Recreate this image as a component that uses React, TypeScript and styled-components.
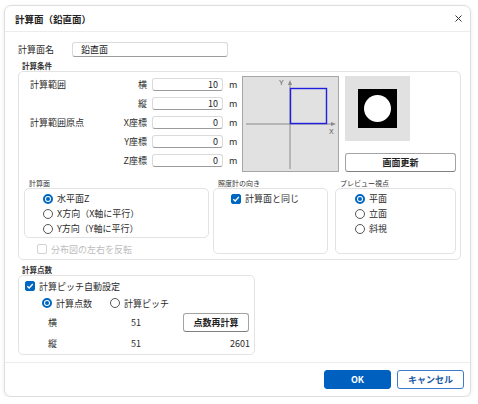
import React from "react";
import styled, { createGlobalStyle, css } from "styled-components";

const ACCENT = "#0067c0";

const GlobalStyle = createGlobalStyle`
  * { box-sizing: border-box; }
  html, body { margin: 0; padding: 0; background: #fff; }
  body {
    font-family: "Noto Sans CJK JP", "Noto Sans", sans-serif;
    font-size: 9px;
    color: #2b2b2b;
  }
`;

const Dialog = styled.div`
  margin: 5px 0 0 4px;
  width: 467px;
  height: 392px;
  border: 1px solid #dedede;
  border-radius: 7px;
  background: #fff;
  box-shadow: 0 1px 4px rgba(0, 0, 0, 0.08);
  display: flex;
  flex-direction: column;
  overflow: hidden;
`;

const Header = styled.div`
  flex: none;
  height: 26px;
  display: flex;
  align-items: center;
  justify-content: space-between;
  padding: 0 7px 0 10px;
  border-bottom: 1px solid #ececec;
`;

const Title = styled.div`
  font-size: 9.5px;
  font-weight: 700;
  color: #222;
`;

const CloseButton = styled.button`
  width: 9px;
  height: 9px;
  padding: 0;
  border: 0;
  background: none;
  display: flex;
  align-items: center;
  justify-content: center;
`;

const Body = styled.div`
  flex: 1;
  padding: 10px 0 0 13px;
`;

const NameRow = styled.div`
  display: flex;
  align-items: center;
  height: 15px;
`;

const NameLabel = styled.div`
  width: 54px;
`;

const inputBase = css`
  height: 100%;
  border: 1px solid #dadada;
  border-bottom-color: #9c9c9c;
  border-radius: 3px;
  background: #fff;
  font-family: inherit;
  font-size: 9px;
  color: #222;
  outline: none;
`;

const TextInput = styled.input`
  ${inputBase}
  width: 156px;
  padding: 0 8px;
`;

const GroupTitle = styled.div<{ $top: number }>`
  margin: ${(p) => p.$top}px 0 0 4px;
  height: 11px;
  line-height: 11px;
  font-size: 7.5px;
  font-weight: 700;
  color: #333;
`;

const GroupBox = styled.div<{ $width: number }>`
  width: ${(p) => p.$width}px;
  border: 1px solid #e3e3e3;
  border-radius: 5px;
  padding: 3px 3px 3px 3px;
`;

const TopArea = styled.div`
  display: flex;
  align-items: flex-start;
  padding-left: 8px;
`;

const FieldGrid = styled.div`
  display: grid;
  grid-template-columns: 82px 30px 71px 8px;
  grid-auto-rows: 19px;
  column-gap: 5px;
  align-items: center;
`;

const AxisLabel = styled.div`
  text-align: right;
`;

const NumberInput = styled.input`
  ${inputBase}
  height: 13px;
  width: 71px;
  text-align: right;
  padding: 0 4px 0 0;
`;

const Unit = styled.div`
  margin-left: 1px;
`;

const AxisPreview = styled.div`
  flex: none;
  width: 97px;
  height: 96px;
  margin: 1px 0 0 6px;
  background: #e1e1e1;
  border: 1px solid #a6a6a6;
  svg {
    display: block;
  }
`;

const RightColumn = styled.div`
  display: flex;
  flex-direction: column;
  margin-left: 6px;
`;

const ShapePreview = styled.div`
  width: 65px;
  height: 65px;
  margin-top: 1px;
  background: #e1e1e1;
  svg {
    display: block;
  }
`;

const PlainButton = styled.button<{ $width: number }>`
  width: ${(p) => p.$width}px;
  height: 19px;
  padding: 0;
  border: 1px solid #a3a3a3;
  border-bottom-color: #808080;
  border-radius: 3px;
  background: #fff;
  font-family: inherit;
  font-size: 9px;
  font-weight: 700;
  color: #222;
`;

const UpdateButton = styled(PlainButton)`
  margin-top: 12px;
`;

const SubArea = styled.div`
  display: flex;
  align-items: flex-start;
  margin-top: 6px;
  padding-left: 2px;
`;

const SubGroup = styled.div<{ $gap?: number }>`
  display: flex;
  flex-direction: column;
  margin-left: ${(p) => p.$gap ?? 0}px;
`;

const SubLabel = styled.div`
  height: 10px;
  line-height: 10px;
  padding-left: 5px;
  font-size: 7px;
  color: #333;
`;

const SubBox = styled.div<{ $width: number; $height: number; $pad?: number }>`
  width: ${(p) => p.$width}px;
  height: ${(p) => p.$height}px;
  border: 1px solid #e3e3e3;
  border-radius: 5px;
  padding: 2px 0 0 ${(p) => p.$pad ?? 18}px;
`;

const OptionRow = styled.div<{ $height?: number }>`
  display: flex;
  align-items: center;
  gap: 4px;
  height: ${(p) => p.$height ?? 15}px;
`;

const RadioDot = styled.span<{ $on?: boolean }>`
  flex: none;
  width: 10px;
  height: 10px;
  border-radius: 50%;
  background: #fff;
  border: ${(p) => (p.$on ? `2px solid ${ACCENT}` : "1px solid #555")};
  display: flex;
  align-items: center;
  justify-content: center;
  &::after {
    content: "";
    display: ${(p) => (p.$on ? "block" : "none")};
    width: 4px;
    height: 4px;
    border-radius: 50%;
    background: ${ACCENT};
  }
`;

const CheckMark = styled.span<{ $on?: boolean; $disabled?: boolean }>`
  flex: none;
  width: 10px;
  height: 10px;
  border-radius: 2px;
  background: ${(p) => (p.$on ? ACCENT : "#fff")};
  border: 1px solid
    ${(p) => (p.$on ? ACCENT : p.$disabled ? "#d2d2d2" : "#555")};
  display: flex;
  align-items: center;
  justify-content: center;
`;

const DisabledRow = styled(OptionRow)`
  margin-top: 4px;
  padding-left: 13px;
  color: #bdbdbd;
`;

const CheckRow = styled(OptionRow)`
  padding-left: 3px;
`;

const PitchRadioRow = styled(OptionRow)`
  margin-top: 3px;
  padding-left: 20px;
`;

const Spacer = styled.span`
  width: 10px;
`;

const DataRow = styled.div<{ $height: number; $top: number }>`
  display: flex;
  align-items: center;
  height: ${(p) => p.$height}px;
  margin-top: ${(p) => p.$top}px;
  padding: 0 2px 0 26px;
`;

const DataLabel = styled.div`
  width: 83px;
`;

const DataValue = styled.div`
  flex: 1;
`;

const Total = styled.div`
  margin-right: -1px;
`;

const Footer = styled.div`
  flex: none;
  height: 34px;
  border-top: 1px solid #ececec;
  display: flex;
  align-items: center;
  justify-content: flex-end;
  gap: 6px;
  padding-right: 6px;
`;

const DialogButton = styled.button<{ $primary?: boolean }>`
  width: 67px;
  height: 19px;
  padding: 0;
  border-radius: 3px;
  font-family: inherit;
  font-size: 9px;
  font-weight: 700;
  border: 1px solid ${(p) => (p.$primary ? "#0060c0" : "#3a7dcc")};
  background: ${(p) => (p.$primary ? "#0060c0" : "#fff")};
  color: ${(p) => (p.$primary ? "#fff" : "#1b5aa6")};
`;

function Radio({ on, label }: { on?: boolean; label: string }) {
  return (
    <>
      <RadioDot $on={on} />
      <span>{label}</span>
    </>
  );
}

function Check({ on, disabled }: { on?: boolean; disabled?: boolean }) {
  return (
    <CheckMark $on={on} $disabled={disabled}>
      {on && (
        <svg width="8" height="8" viewBox="0 0 8 8">
          <polyline
            points="1.3,4.2 3.2,6 6.8,2"
            fill="none"
            stroke="#fff"
            strokeWidth="1.3"
          />
        </svg>
      )}
    </CheckMark>
  );
}

const fields = [
  { label: "計算範囲", axis: "横", value: "10" },
  { label: "", axis: "縦", value: "10" },
  { label: "計算範囲原点", axis: "X座標", value: "0" },
  { label: "", axis: "Y座標", value: "0" },
  { label: "", axis: "Z座標", value: "0" },
];

export default function App() {
  return (
    <>
      <GlobalStyle />
      <Dialog>
        <Header>
          <Title>計算面（鉛直面）</Title>
          <CloseButton aria-label="閉じる">
            <svg width="7" height="7" viewBox="0 0 7 7">
              <path d="M0.5 0.5L6.5 6.5M6.5 0.5L0.5 6.5" stroke="#333" strokeWidth="1" />
            </svg>
          </CloseButton>
        </Header>

        <Body>
          <NameRow>
            <NameLabel>計算面名</NameLabel>
            <TextInput readOnly value="鉛直面" />
          </NameRow>

          <GroupTitle $top={3}>計算条件</GroupTitle>
          <GroupBox $width={443}>
            <TopArea>
              <FieldGrid>
                {fields.map((f) => (
                  <React.Fragment key={f.axis}>
                    <div>{f.label}</div>
                    <AxisLabel>{f.axis}</AxisLabel>
                    <NumberInput readOnly value={f.value} />
                    <Unit>m</Unit>
                  </React.Fragment>
                ))}
              </FieldGrid>

              <AxisPreview>
                <svg width="95" height="94" viewBox="0 0 95 94">
                  <line x1="3" y1="47" x2="90" y2="47" stroke="#8a8a8a" strokeWidth="1" />
                  <line x1="47" y1="6" x2="47" y2="92" stroke="#8a8a8a" strokeWidth="1" />
                  <polygon points="93,47 88,45 88,49" fill="#8a8a8a" />
                  <polygon points="47,3 45,8 49,8" fill="#8a8a8a" />
                  <rect x="47.5" y="11.5" width="36" height="35" fill="none" stroke="#1f1fe0" strokeWidth="1.4" />
                  <text x="36" y="8" fontSize="7" fill="#555" fontFamily="Liberation Sans, sans-serif">Y</text>
                  <text x="86" y="57" fontSize="7" fill="#555" fontFamily="Liberation Sans, sans-serif">X</text>
                </svg>
              </AxisPreview>

              <RightColumn>
                <ShapePreview>
                  <svg width="65" height="65" viewBox="0 0 65 65">
                    <rect x="13" y="13" width="39" height="39" fill="#000" />
                    <circle cx="32.5" cy="32.5" r="13.5" fill="#fff" />
                  </svg>
                </ShapePreview>
                <UpdateButton $width={111}>画面更新</UpdateButton>
              </RightColumn>
            </TopArea>

            <SubArea>
              <SubGroup>
                <SubLabel>計算面</SubLabel>
                <SubBox $width={185} $height={50}>
                  <OptionRow>
                    <Radio on label="水平面Z" />
                  </OptionRow>
                  <OptionRow>
                    <Radio label="X方向（X軸に平行）" />
                  </OptionRow>
                  <OptionRow>
                    <Radio label="Y方向（Y軸に平行）" />
                  </OptionRow>
                </SubBox>
                <DisabledRow $height={14}>
                  <Check disabled />
                  <span>分布図の左右を反転</span>
                </DisabledRow>
              </SubGroup>

              <SubGroup $gap={4}>
                <SubLabel>照度計の向き</SubLabel>
                <SubBox $width={115} $height={66} $pad={17}>
                  <OptionRow>
                    <Check on />
                    <span>計算面と同じ</span>
                  </OptionRow>
                </SubBox>
              </SubGroup>

              <SubGroup $gap={7}>
                <SubLabel>プレビュー視点</SubLabel>
                <SubBox $width={121} $height={66} $pad={19}>
                  <OptionRow>
                    <Radio on label="平面" />
                  </OptionRow>
                  <OptionRow>
                    <Radio label="立面" />
                  </OptionRow>
                  <OptionRow>
                    <Radio label="斜視" />
                  </OptionRow>
                </SubBox>
              </SubGroup>
            </SubArea>
          </GroupBox>

          <GroupTitle $top={4}>計算点数</GroupTitle>
          <GroupBox $width={237} style={{ paddingBottom: 4 }}>
            <CheckRow $height={14}>
              <Check on />
              <span>計算ピッチ自動設定</span>
            </CheckRow>
            <PitchRadioRow $height={14}>
              <Radio on label="計算点数" />
              <Spacer />
              <Radio label="計算ピッチ" />
            </PitchRadioRow>
            <DataRow $height={18} $top={3}>
              <DataLabel>横</DataLabel>
              <DataValue>51</DataValue>
              <PlainButton $width={66}>点数再計算</PlainButton>
            </DataRow>
            <DataRow $height={14} $top={5}>
              <DataLabel>縦</DataLabel>
              <DataValue>51</DataValue>
              <Total>2601</Total>
            </DataRow>
          </GroupBox>
        </Body>

        <Footer>
          <DialogButton $primary>OK</DialogButton>
          <DialogButton>キャンセル</DialogButton>
        </Footer>
      </Dialog>
    </>
  );
}
